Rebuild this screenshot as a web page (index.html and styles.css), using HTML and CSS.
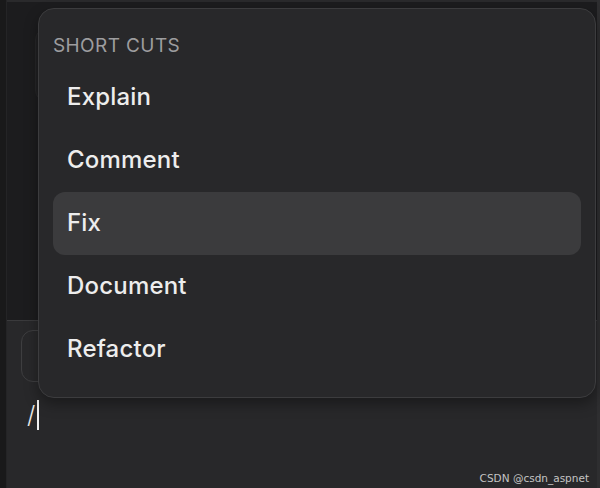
FILE: index.html
```html
<!DOCTYPE html>
<html>
<head>
<meta charset="utf-8">
<link rel="stylesheet" href="styles.css">
</head>
<body>
<div class="app">
  <div class="rail"></div>
  <div class="main">
    <div class="top">
      <div class="topline"></div>
      <div class="card-behind"></div>
    </div>
    <div class="bottom">
      <div class="input-box"></div>
      <div class="prompt"><span class="slash">/</span><span class="caret"></span></div>
      <div class="watermark">CSDN @csdn_aspnet</div>
    </div>
  </div>
  <div class="scroll"></div>
</div>
<div class="menu">
  <div class="menu-title">SHORT CUTS</div>
  <div class="item">Explain</div>
  <div class="item">Comment</div>
  <div class="item active">Fix</div>
  <div class="item">Document</div>
  <div class="item">Refactor</div>
</div>
</body>
</html>
```

FILE: styles.css
```css
html, body {
  margin: 0;
  padding: 0;
  width: 600px;
  height: 488px;
  overflow: hidden;
  background: #1c1c1e;
  font-family: Inter, "Noto Sans", sans-serif;
}
.app {
  display: flex;
  width: 600px;
  height: 488px;
}
.rail {
  width: 6px;
  background: #19191a;
  border-right: 1px solid #242426;
}
.main {
  flex: 1;
  display: flex;
  flex-direction: column;
}
.top {
  height: 320px;
  background: #1c1c1e;
  position: relative;
}
.topline {
  height: 2px;
  background: #2a2a2c;
}
.card-behind {
  margin: 26px 0 0 28px;
  width: 200px;
  height: 72px;
  border: 1px solid #262628;
  border-radius: 12px;
  background: #202022;
}
.bottom {
  flex: 1;
  background: #28282a;
  border-top: 1px solid #3a3a3c;
  position: relative;
}
.input-box {
  margin: 9px 0 0 14px;
  width: 200px;
  height: 50px;
  border: 1px solid #3e3e40;
  border-radius: 12px;
}
.prompt {
  display: flex;
  align-items: center;
  margin: 18px 0 0 20px;
  height: 30px;
}
.slash {
  color: #e8e8e8;
  font-size: 24px;
  font-weight: 300;
  line-height: 30px;
}
.caret {
  width: 2px;
  height: 30px;
  background: #f0f0f0;
  margin-left: 2px;
}
.watermark {
  position: absolute;
  right: 8px;
  bottom: 4px;
  font-family: "DejaVu Sans", sans-serif;
  font-size: 10.5px;
  color: #c4c4c4;
}
.scroll {
  width: 3px;
  background: #2e2e30;
}
.menu {
  position: absolute;
  left: 38px;
  top: 8px;
  width: 528px;
  padding: 19px 14px 16px 14px;
  background: #28282a;
  border: 1px solid #3c3c3e;
  border-radius: 16px;
  box-shadow: 0 6px 14px rgba(0,0,0,0.35);
}
.menu-title {
  font-size: 19px;
  letter-spacing: 0.4px;
  color: #9d9d9f;
  padding-left: 0;
  height: 38px;
  line-height: 36px;
}
.item {
  height: 63px;
  line-height: 62px;
  padding-left: 14px;
  font-size: 24px;
  letter-spacing: 0.2px;
  font-weight: 500;
  color: #ededed;
  border-radius: 12px;
}
.item.active {
  background: #3b3b3d;
}
```
